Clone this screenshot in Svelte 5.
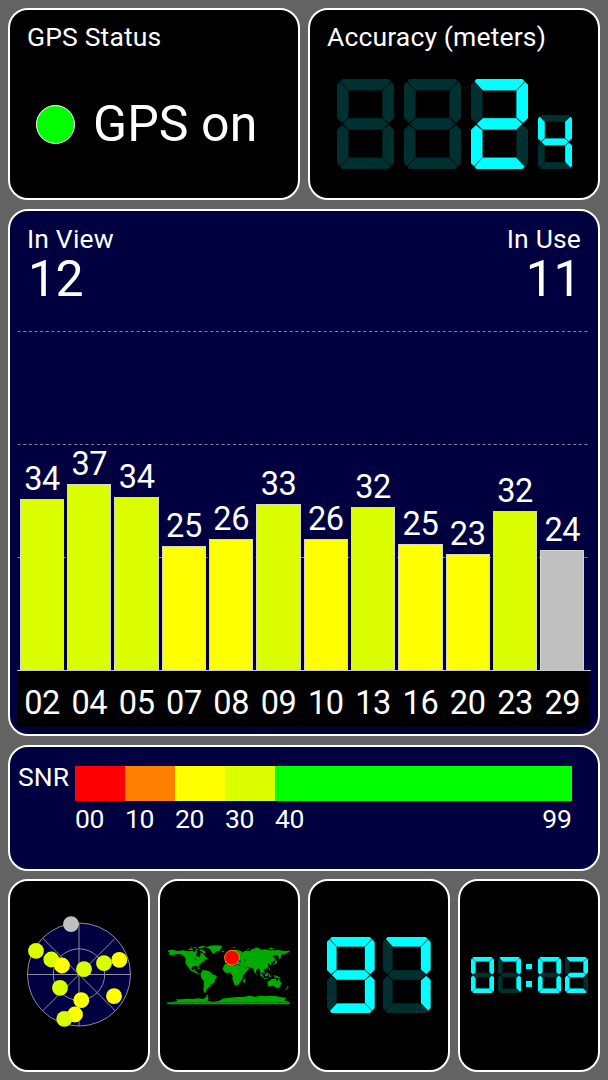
<script>
  const segments = {
    a: "3.7,2.3 5.7,0 51.3,0 53.5,2.3 45.2,11.2 11.7,11.2",
    b: "54.2,2.9 57,6 57,39 52,43.8 45.6,38.4 45.6,11.8",
    c: "52,46.2 57,51 57,84 54.2,87.1 45.6,78.2 45.6,51.6",
    d: "3.7,87.7 5.7,90 51.3,90 53.5,87.7 45.2,78.8 11.7,78.8",
    e: "5,46.2 0,51 0,84 2.9,87.1 11.3,78.2 11.3,51.6",
    f: "2.9,2.9 0,6 0,39 5,43.8 11.3,38.4 11.3,11.8",
    g: "6,45 11.8,39.3 45.2,39.3 51,45 45.2,50.6 11.8,50.6"
  };

  const lit = {
    "0": "abcdef",
    "2": "abged",
    "4": "fgbc",
    "7": "abc",
    "9": "abcdfg",
    " ": ""
  };

  const satellites = [
    { id: "02", snr: 34, level: 171, color: "lime" },
    { id: "04", snr: 37, level: 186, color: "lime" },
    { id: "05", snr: 34, level: 173, color: "lime" },
    { id: "07", snr: 25, level: 124, color: "yellow" },
    { id: "08", snr: 26, level: 131, color: "yellow" },
    { id: "09", snr: 33, level: 166, color: "lime" },
    { id: "10", snr: 26, level: 131, color: "yellow" },
    { id: "13", snr: 32, level: 163, color: "lime" },
    { id: "16", snr: 25, level: 126, color: "yellow" },
    { id: "20", snr: 23, level: 116, color: "yellow" },
    { id: "23", snr: 32, level: 159, color: "lime" },
    { id: "29", snr: 24, level: 120, color: "grey" }
  ];

  const scale = [
    { from: "00", color: "red" },
    { from: "10", color: "orange" },
    { from: "20", color: "yellow" },
    { from: "30", color: "lime" },
    { from: "40", to: "99", color: "green" }
  ];

  // positions on the sky plot, relative to the zenith
  const sky = [
    { x: -8, y: -50.3, color: "grey" },
    { x: -43, y: -23.6, color: "lime" },
    { x: -27.7, y: -15, color: "lime" },
    { x: -17, y: -9, color: "yellow" },
    { x: 5, y: -5.3, color: "lime" },
    { x: 25, y: -11.3, color: "lime" },
    { x: 40.3, y: -14.6, color: "yellow" },
    { x: -19, y: 13.4, color: "lime" },
    { x: 2.3, y: 25.7, color: "yellow" },
    { x: 35, y: 21.7, color: "yellow" },
    { x: -4, y: 40, color: "yellow" },
    { x: -14.7, y: 44.4, color: "lime" }
  ];
</script>

{#snippet digit(char, size)}
  <svg class="digit {size}" viewBox="0 0 57 90" preserveAspectRatio="none">
    {#each Object.keys(segments) as key}
      <polygon points={segments[key]} class:on={lit[char].includes(key)} />
    {/each}
  </svg>
{/snippet}

<main>
  <section class="row top">
    <div class="panel status">
      <h2>GPS Status</h2>
      <div class="state">
        <span class="led"></span>
        <span class="state-text">GPS on</span>
      </div>
    </div>
    <div class="panel accuracy">
      <h2>Accuracy (meters)</h2>
      <div class="digits">
        {@render digit(" ", "large")}
        {@render digit(" ", "large")}
        {@render digit("2", "large")}
        {@render digit("4", "small")}
      </div>
    </div>
  </section>

  <section class="panel blue signal">
    <div class="counts">
      <div>
        <h2>In View</h2>
        <div class="count">12</div>
      </div>
      <div class="used">
        <h2>In Use</h2>
        <div class="count">11</div>
      </div>
    </div>
    <div class="chart">
      <svg class="grid" viewBox="0 0 573 341">
        <path d="M0.5 1.5H571M0.5 114.5H571M0.5 227.5H571" />
      </svg>
      <div class="bars">
        {#each satellites as sat}
          <div class="column">
            <span class="value">{sat.snr}</span>
            <div class="bar {sat.color}" style="height: {sat.level}px"></div>
          </div>
        {/each}
      </div>
    </div>
    <div class="ids">
      {#each satellites as sat}
        <span>{sat.id}</span>
      {/each}
    </div>
  </section>

  <section class="panel blue snr">
    <span class="snr-label">SNR</span>
    <div class="scale">
      {#each scale as step}
        <div class="step">
          <div class="swatch {step.color}"></div>
          <div class="limits">
            <span>{step.from}</span>
            {#if step.to}<span>{step.to}</span>{/if}
          </div>
        </div>
      {/each}
    </div>
  </section>

  <section class="row bottom">
    <div class="panel center">
      <svg class="radar" width="120" height="120" viewBox="-60 -59.5 120 120">
        <circle class="sky" r="51.5" />
        <circle class="ring" r="25.7" />
        <path class="ring" d="M-51.5 0H51.5M0 -51.5V51.5M-36.4 -36.4L36.4 36.4M-36.4 36.4L36.4 -36.4" />
        {#each sky as dot}
          <circle class={dot.color} cx={dot.x} cy={dot.y} r="7.9" />
        {/each}
      </svg>
    </div>
    <div class="panel center">
      <svg class="map" width="124" height="60" viewBox="21 35 372 180">
        <path d="M22 54L28 50 38 49 54 53 70 51 84 54 98 52 104 56 108 50 113 53 108 61 110 68 118 71 122 64 120 58 128 60 134 66 137 71 144 76 141 79 132 79 136 83 127 87 121 92 116 98 116 105 113 104 112 99 104 98 97 100 94 105 97 110 102 109 104 106 107 106 105 112 111 115 113 120 120 121 117 124 109 120 101 115 91 111 86 103 79 94 76 86 77 75 71 68 62 63 51 62 41 66 31 71 38 65 29 65 25 61 30 58Z" />
        <path d="M136 42L149 38 165 36 186 37 185 44 179 48 181 52 170 54 163 60 157 59 153 52 148 46Z" />
        <path d="M84 47L94 45 102 48 95 51 87 50ZM101 42L108 41 111 45 103 45ZM112 43L122 39 139 37 133 41 122 46ZM116 49L126 48 135 54 138 60 130 60 124 54ZM107 47L114 46 115 49 109 50ZM89 42L97 40 97 43ZM183 54L189 52 194 54 189 57Z" />
        <path d="M109 105L116 105 123 108 117 108ZM124 109L130 109 128 111Z" />
        <path d="M122 119L128 111 135 111 146 113 153 118 157 123 169 127 171 132 166 138 163 148 155 153 150 161 144 163 143 168 139 169 138 176 136 179 133 177 130 171 131 160 132 144 126 137 122 129Z" />
        <path d="M195 92L204 90 213 89 216 94 225 97 229 94 242 97 245 106 250 113 258 112 257 118 249 126 247 138 241 145 237 152 230 157 224 156 220 145 217 136 218 129 214 123 213 118 204 118 197 119 191 113 188 107 191 98ZM250 139L257 134 256 142 253 150 249 147Z" />
        <path d="M195 88L195 80 203 79 199 74 207 71 211 68 208 65 211 57 220 50 230 49 245 54 247 58 253 53 263 52 270 53 276 47 291 44 298 45 304 49 318 48 327 51 345 51 357 50 372 53 389 52 389 57 379 59 374 64 367 62 362 68 363 74 357 78 355 69 351 65 342 66 338 70 344 73 345 80 339 86 333 88 334 95 330 96 327 90 323 90 326 98 321 105 313 108 311 111 315 117 312 121 306 115 305 121 310 128 307 127 301 117 299 108 295 105 289 111 287 121 283 117 280 106 273 103 264 101 260 98 262 104 267 104 261 113 250 117 245 109 241 99 241 94 233 94 227 92 230 86 237 86 244 86 240 81 234 84 228 84 226 91 219 87 215 84 218 90 216 92 209 84 203 85 199 89Z" />
        <path d="M198 72L201 65 205 71 204 75ZM193 70L197 69 196 73ZM256 53L263 47 271 43 266 48ZM215 42L225 41 225 45ZM282 42L289 40 294 43ZM324 44L337 43 342 47 329 47ZM346 80L352 84 349 91 342 94 338 96 345 89ZM351 74L351 81 349 81ZM325 101L328 100 330 110 327 109ZM287 120L291 122 289 125Z" />
        <path d="M299 119L305 123 312 131 309 133 301 126ZM315 123L324 117 326 121 322 129 315 128ZM311 134L324 136 330 138 312 137ZM327 124L334 122 330 126 333 131 328 131ZM340 125L350 128 358 131 363 137 352 134 344 131Z" />
        <path d="M322 145L331 141 334 137 340 137 344 135 350 137 348 141 353 143 355 135 359 141 364 149 361 159 356 164 350 163 344 160 339 157 332 159 324 160ZM354 166L358 166 356 170ZM382 158L387 161 384 163 380 169 375 170 381 164Z" />
        <path d="M22 207L37 206 52 203 48 198 64 198 83 196 98 197 115 195 130 197 138 192 139 186 146 184 142 190 146 195 142 202 159 205 176 203 188 196 206 193 225 192 240 191 256 190 266 187 278 189 286 191 298 187 315 189 335 187 351 189 364 192 379 193 373 201 389 206 389 213 22 213Z" />
        <path class="lakes" d="M104 77L111 79M232 81L239 80M253 78L255 84M250 99L258 105" />
        <path class="shelf" d="M22 208H389" />
        <circle class="here" cx="216" cy="73" r="22.3" />
      </svg>
    </div>
    <div class="panel center speed">
      {@render digit("9", "medium")}
      {@render digit("7", "medium")}
    </div>
    <div class="panel center clock">
      {@render digit("0", "tiny")}
      {@render digit("7", "tiny")}
      <span class="colon"><i></i><i></i></span>
      {@render digit("0", "tiny")}
      {@render digit("2", "tiny")}
    </div>
  </section>
</main>

<style>
  :global(body) {
    background: #636363;
  }
  main {
    box-sizing: border-box;
    width: 608px;
    height: 1080px;
    padding: 8px;
    display: grid;
    grid-template-rows: 192px 528px 126px 193px;
    row-gap: 8.33px;
    background: #636363;
    color: #fff;
    font-family: Roboto, "Liberation Sans", sans-serif;
    font-size: 26.5px;
  }
  .row {
    display: grid;
    gap: 8px;
  }
  .top {
    grid-template-columns: 1fr 1fr;
  }
  .bottom {
    grid-template-columns: repeat(4, 1fr);
  }
  .panel {
    box-sizing: border-box;
    border: 2px solid #fff;
    border-radius: 20px;
    background: #000;
    min-width: 0;
  }
  .blue {
    background: #000040;
  }
  h2 {
    margin: 0;
    font-size: 26.5px;
    line-height: 30px;
    font-weight: 400;
    letter-spacing: 0.15px;
    white-space: nowrap;
  }
  .status,
  .accuracy {
    padding: 12px 17px 0;
  }
  .state {
    display: flex;
    align-items: center;
    gap: 18px;
    padding: 41px 0 0 9px;
  }
  .led {
    box-sizing: border-box;
    width: 39px;
    height: 39px;
    border: 1px solid #fff;
    border-radius: 50%;
    background: #0f0;
  }
  .state-text {
    font-size: 50px;
    line-height: 62px;
    letter-spacing: 0.1px;
  }
  .digits {
    display: flex;
    align-items: flex-end;
    gap: 10px;
    padding: 27px 0 0 10px;
  }
  .digit {
    display: block;
    flex: none;
    fill: #003030;
    stroke: #003030;
    stroke-width: 0.4;
  }
  .digit .on {
    fill: #0ff;
    stroke: #0ff;
  }
  .large {
    width: 57px;
    height: 90px;
  }
  .small {
    width: 34px;
    height: 54px;
  }
  .medium {
    width: 47.5px;
    height: 76px;
  }
  .tiny {
    width: 23px;
    height: 36px;
  }
  .signal {
    display: flex;
    flex-direction: column;
    margin-top: 0.67px;
    padding: 0 7px;
  }
  .counts {
    display: flex;
    justify-content: space-between;
    height: 119px;
    box-sizing: border-box;
    padding: 13px 10px 0;
  }
  .used {
    text-align: right;
  }
  .count {
    font-size: 50px;
    line-height: 50px;
    letter-spacing: -0.5px;
    padding-left: 1px;
  }
  .chart {
    position: relative;
    height: 341px;
    border-bottom: 1px solid #c8c8d0;
    box-sizing: border-box;
  }
  .grid {
    position: absolute;
    inset: 0;
    width: 573px;
    height: 341px;
    stroke: #8080a0;
    stroke-dasharray: 3 2.67;
    fill: none;
  }
  .bars {
    position: relative;
    display: flex;
    align-items: flex-end;
    height: 100%;
    width: 567.5px;
    padding-left: 1.4px;
  }
  .column {
    flex: 1;
    display: flex;
    flex-direction: column;
    align-items: center;
  }
  .value {
    font-size: 32.5px;
    line-height: 36px;
    margin-bottom: 2px;
    letter-spacing: -0.4px;
  }
  .bar {
    box-sizing: border-box;
    width: 44.3px;
    border: 1px solid #d8d8c0;
    border-bottom: 0;
  }
  .ids {
    display: flex;
    width: 567.5px;
    height: 56px;
    padding: 0 4.1px 0 1.4px;
    background: #000;
    font-size: 32.5px;
    line-height: 64px;
    letter-spacing: -0.4px;
  }
  .ids span {
    flex: 1;
    text-align: center;
  }
  .lime {
    background: #dcff00;
    fill: #dcff00;
  }
  .yellow {
    background: #ff0;
    fill: #ff0;
  }
  .grey {
    background: #c0c0c0;
    fill: #c0c0c0;
  }
  .red {
    background: #f00;
  }
  .orange {
    background: #ff8000;
  }
  .green {
    background: #0f0;
  }
  .snr {
    display: flex;
    padding: 19px 26.5px 0 8px;
  }
  .snr-label {
    width: 57px;
    line-height: 22px;
  }
  .scale {
    flex: 1;
    display: grid;
    grid-template-columns: repeat(4, 50px) 1fr;
  }
  .swatch {
    height: 35px;
  }
  .limits {
    display: flex;
    justify-content: space-between;
    line-height: 36px;
    letter-spacing: -0.3px;
  }
  .center {
    display: flex;
    align-items: center;
    justify-content: center;
  }
  .radar {
    overflow: visible;
  }
  .sky {
    fill: #000040;
    stroke: #8c8ca0;
  }
  .ring {
    fill: none;
    stroke: #8c8ca0;
  }
  .map {
    fill: #00aa00;
  }
  .lakes {
    fill: none;
    stroke: #000;
    stroke-width: 2;
  }
  .shelf {
    stroke: #007000;
    stroke-width: 2;
  }
  .here {
    fill: #f00;
    stroke: #ffa000;
    stroke-width: 2.5;
  }
  .speed {
    gap: 8.5px;
  }
  .clock {
    gap: 4px;
  }
  .colon {
    display: flex;
    flex-direction: column;
    gap: 12px;
    padding: 0 1.5px;
  }
  .colon i {
    width: 6px;
    height: 5.5px;
    background: #0ff;
  }
</style>
